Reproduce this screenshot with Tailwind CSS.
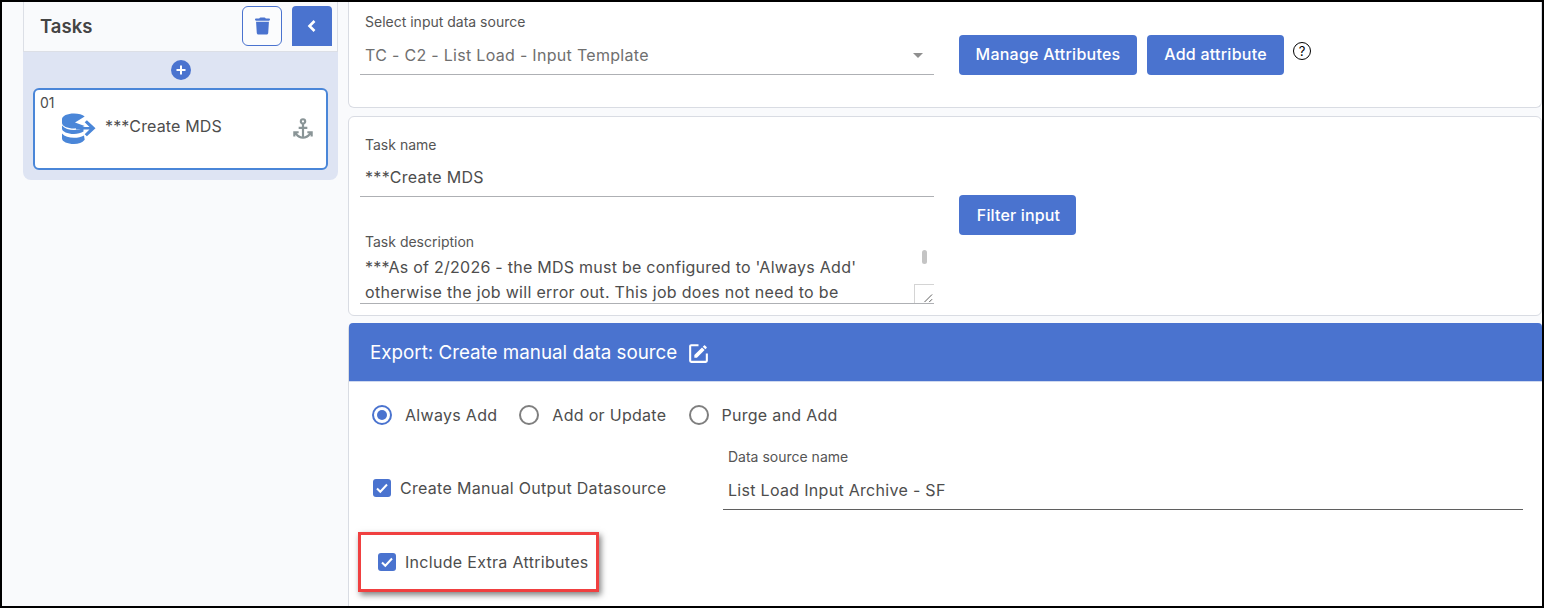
<!DOCTYPE html>
<html lang="en">
<head>
    <meta charset="UTF-8">
    <title>Tasks</title>
    <script src="https://cdn.jsdelivr.net/npm/@tailwindcss/browser@4"></script>
</head>
<body class="font-['Inter',sans-serif] bg-white overflow-hidden">
    <div class="w-[1544px] h-[608px] flex border-2 border-black bg-[#f9fafc] overflow-hidden text-[#4d4d4d]">

        <!-- Tasks sidebar -->
        <aside class="w-[347px] shrink-0 pl-[21px] pr-[11px]">
            <div class="rounded-b-lg bg-[#dee4f3] h-[178px]">
                <div class="h-[50px] bg-[#f9fafc] border-b border-x border-[#dcdfe6] flex items-center pl-4 pr-[5px]">
                    <h2 class="text-[18.5px] font-semibold text-[#444] grow">Tasks</h2>
                    <button class="w-10 h-10 rounded-md border border-[#4a73cf] flex items-center justify-center mr-[10px] -mt-[2px] bg-white/40">
                        <svg class="w-[15px] h-[18px] fill-[#4a73cf]" viewBox="0 0 448 512"><path d="M135.2 17.7L128 32H32C14.3 32 0 46.3 0 64S14.3 96 32 96H416c17.7 0 32-14.3 32-32s-14.3-32-32-32H320l-7.2-14.3C307.4 6.8 296.3 0 284.2 0H163.8c-12.1 0-23.2 6.8-28.6 17.7zM416 128H32L53.2 467c1.6 25.3 22.6 45 47.9 45H346.9c25.3 0 46.3-19.7 47.9-45L416 128z"/></svg>
                    </button>
                    <button class="w-10 h-10 rounded-t-sm bg-[#4a73cf] flex items-center justify-center -mt-[2px]">
                        <svg class="w-4 h-4" viewBox="0 0 16 16" fill="none" stroke="white" stroke-width="2.6"><path d="M10.5 3L5.5 8l5 5"/></svg>
                    </button>
                </div>
                <div class="flex justify-center pt-[8px]">
                    <span class="w-5 h-5 rounded-full bg-[#4a73cf] flex items-center justify-center">
                        <svg class="w-3 h-3" viewBox="0 0 12 12" stroke="white" stroke-width="2"><path d="M6 1.500v9M1.500 6h9"/></svg>
                    </span>
                </div>
                <div class="mx-[10px] mt-[8px] h-[82px] rounded-md border-2 border-[#4a86d8] bg-white relative pl-[5px]">
                    <div class="text-sm leading-4 pt-[5px]">01</div>
                    <div class="flex items-start pl-[21px] mt-[2px]">
                        <svg class="w-[36px] h-[32px] fill-[#4a86d8]" viewBox="0 0 36 32">
                            <path d="M1 6c0-3.200 5.500-5.600 12-5.600 4.600 0 8.600 1.200 10.700 3L14 9.500l9.700 3.500C21 14.700 17.500 15.500 13 15.500c-6.500 0-12-2.500-12-5.500z" />
                            <path d="M1 12.500c2.500 3 7 4.500 12 4.500 3.500 0 7-.7 9.500-2v3.500c-2.500 1.600-5.800 2.500-9.500 2.500-6.500 0-12-2.400-12-5.500z" />
                            <path d="M1 20.500c2.500 3 7 4.300 12 4.300 3.800 0 7.200-.8 10-2.300l.7 4.200C21.200 29.700 17.500 31 13 31 6.500 31 1 28.500 1 25.500z" />
                            <path d="M15 14h13.500l-4.800-4.800 2.200-2 8.600 8-8.600 8-2.200-2 4.800-4.700H15z" />
                        </svg>
                        <span class="text-base tracking-[.15px] ml-[8px] mt-[1px]">***Create MDS</span>
                    </div>
                    <svg class="absolute right-[10px] top-[26px] w-[26px] h-[26px] fill-[#8a9597]" viewBox="0 0 24 24"><path d="M12,2A3,3 0 0,0 9,5C9,6.270 9.800,7.400 11,7.830V10H8V12H11V18.920C9.160,18.630 7.530,17.570 6.530,16H8V14H3V19H5V17.300C6.580,19.610 9.200,21 12,21C14.800,21 17.420,19.610 19,17.300V19H21V14H16V16H17.460C16.460,17.570 14.830,18.630 13,18.920V12H16V10H13V7.830C14.200,7.400 15,6.270 15,5A3,3 0 0,0 12,2M12,4A1,1 0 0,1 13,5A1,1 0 0,1 12,6A1,1 0 0,1 11,5A1,1 0 0,1 12,4Z"/></svg>
                </div>
            </div>
        </aside>

        <!-- Main column -->
        <main class="grow flex flex-col gap-2 min-w-0 -ml-px">
            <section class="h-[106px] shrink-0 bg-white border border-t-0 border-[#d9dce3] rounded-b-md flex pl-[11px]">
                <div class="w-[574px] shrink-0">
                    <label class="block pl-[5px] pt-[12px] text-sm leading-4 text-[#555]">Select input data source</label>
                    <div class="h-[45px] border-b border-[#aeb0b4] pl-[5px] pt-[15px] flex justify-between items-start">
                        <span class="text-base leading-5 tracking-[.3px] text-[#6f6f6f]">TC - C2 - List Load - Input Template</span>
                        <span class="mt-[8px] mr-[11px] border-x-[5px] border-x-transparent border-t-[5px] border-t-[#8f8f8f]"></span>
                    </div>
                </div>
                <div class="flex items-start pt-[33px] pl-[25px]">
                    <button class="h-10 w-[178px] pb-[2px] rounded-sm bg-[#4a73cf] text-white text-base font-medium tracking-[.25px]">Manage Attributes</button>
                    <button class="h-10 w-[137px] pb-[2px] ml-[10px] rounded-sm bg-[#4a73cf] text-white text-base font-medium tracking-[.25px]">Add attribute</button>
                    <span class="ml-[9px] w-[18px] h-[18px] mt-[7px] rounded-full border border-black text-black text-[13px] leading-4 flex items-center justify-center">?</span>
                </div>
            </section>

            <section class="h-[200px] shrink-0 bg-white border border-[#d9dce3] rounded-md flex pl-[11px] -mb-px">
                <div class="w-[574px] shrink-0">
                    <label class="block pl-[5px] pt-[20px] text-sm leading-4 text-[#555]">Task name</label>
                    <div class="h-[44px] border-b border-[#aeb0b4] pl-[5px] pt-[14px] text-base leading-5 tracking-[.3px]">***Create MDS</div>
                    <label class="block pl-[5px] pt-[37px] text-sm leading-4 text-[#555]">Task description</label>
                    <div class="relative h-[54px] border-b border-[#aeb0b4] pl-[5px] pt-[5px] text-base leading-[25px] tracking-[.3px] overflow-hidden whitespace-nowrap">
                        <p class="tracking-[.25px]">***As of 2/2026 - the MDS must be configured to 'Always Add'</p>
                        <p>otherwise the job will error out. This job does not need to be</p>
                        <span class="absolute right-0 top-[-6px] w-[20px] h-[26px] flex justify-center items-center">
                            <span class="w-[5px] h-[14px] rounded-full bg-[#c4c4c4]"></span>
                        </span>
                        <span class="absolute right-0 bottom-0 w-[20px] h-[19px] bg-white border-l border-t border-[#d4d4d4]">
                            <svg class="w-full h-full" viewBox="0 0 20 19" stroke="#555" fill="none"><path d="M10 18l8-8M15 18l3-3"/></svg>
                        </span>
                    </div>
                </div>
                <div class="pl-[25px] pt-[78px]">
                    <button class="h-10 w-[117px] pl-[2px] rounded-sm bg-[#4a73cf] text-white text-base font-medium tracking-[.15px]">Filter input</button>
                </div>
            </section>

            <section class="grow bg-white border-l border-[#d9dce3] rounded-t-md">
                <header class="h-[59px] pt-[2px] bg-[#4a73cf] border-b border-[#cfd9ef] flex items-center pl-[21px] text-white text-[18.8px] rounded-t-sm">
                    <span>Export: Create manual data source</span>
                    <svg class="ml-[9px] w-[25px] h-[25px] fill-white" viewBox="0 0 24 24"><path d="M5,3C3.890,3 3,3.890 3,5V19A2,2 0 0,0 5,21H19A2,2 0 0,0 21,19V12H19V19H5V5H12V3H5M17.780,4C17.610,4 17.430,4.070 17.300,4.200L16.080,5.410L18.580,7.910L19.800,6.700C20.060,6.440 20.060,6 19.800,5.750L18.250,4.200C18.120,4.070 17.950,4 17.780,4M15.370,6.120L8,13.500V16H10.500L17.870,8.620L15.370,6.120Z"/></svg>
                </header>
                <div class="flex items-center pl-[23px] pt-[23px] text-base leading-5 tracking-[.3px]">
                    <span class="w-5 h-5 rounded-full border-2 border-[#4a73cf] flex items-center justify-center"><span class="w-[10px] h-[10px] rounded-full bg-[#4a73cf]"></span></span>
                    <span class="ml-[13px]">Always Add</span>
                    <span class="ml-[22px] w-5 h-5 rounded-full border-2 border-[#7f7f7f]"></span>
                    <span class="ml-[13px]">Add or Update</span>
                    <span class="ml-[23px] w-5 h-5 rounded-full border-2 border-[#7f7f7f]"></span>
                    <span class="ml-[12px]">Purge and Add</span>
                </div>
                <div class="flex items-start h-[72px] mt-[24px]">
                    <div class="w-[374px] shrink-0 pl-[24px] pt-[29px] flex items-center text-base leading-5 tracking-[.3px]">
                        <span class="w-[18px] h-[18px] rounded-[3px] bg-[#4a73cf] flex items-center justify-center">
                            <svg class="w-4 h-4" viewBox="0 0 16 16" fill="none" stroke="white" stroke-width="2"><path d="M3 8.500l3.300 3.300 6.700-7.300"/></svg>
                        </span>
                        <span class="ml-[9px]">Create Manual Output Datasource</span>
                    </div>
                    <div class="w-[800px] shrink-0">
                        <label class="block pl-[5px] text-sm leading-4 text-[#555]">Data source name</label>
                        <div class="h-[45px] border-b border-[#5f5f5f] pl-[5px] pt-[15px] text-base leading-5 tracking-[.3px]">List Load Input Archive - SF</div>
                    </div>
                </div>
                <div class="ml-[9px] mt-[11px] w-[241px] h-[60px] border-[3px] border-[#f04040] shadow-[2px_3px_6px_rgba(0,0,0,.5)] flex items-center pl-[17px] text-base tracking-[.3px]">
                    <span class="w-[18px] h-[18px] rounded-[3px] bg-[#4a73cf] flex items-center justify-center">
                        <svg class="w-4 h-4" viewBox="0 0 16 16" fill="none" stroke="white" stroke-width="2"><path d="M3 8.500l3.300 3.300 6.700-7.300"/></svg>
                    </span>
                    <span class="ml-[9px]">Include Extra Attributes</span>
                </div>
            </section>
        </main>
    </div>
</body>
</html>
